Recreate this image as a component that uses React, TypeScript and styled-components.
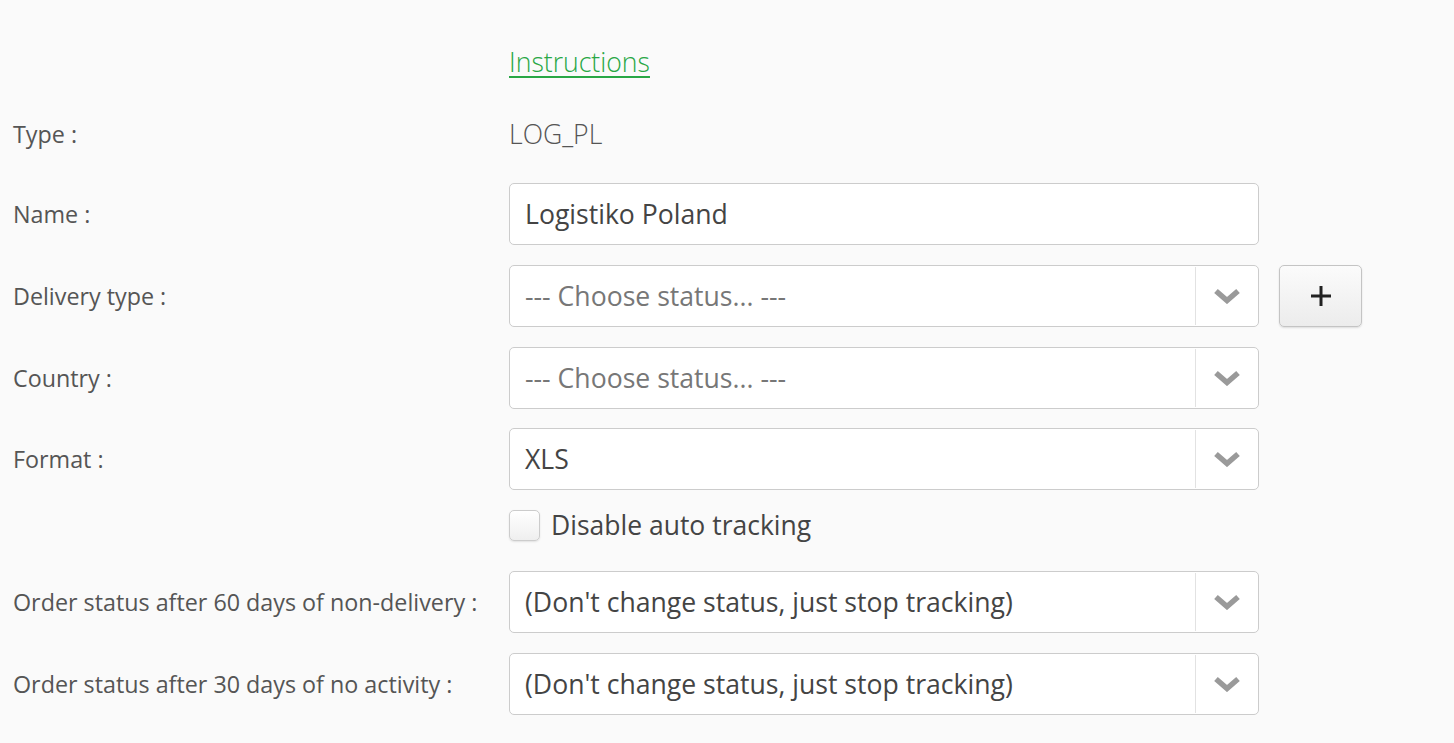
import styled, { createGlobalStyle } from "styled-components";

const GlobalStyle = createGlobalStyle`
  html, body {
    margin: 0;
    padding: 0;
    background: #fafafa;
  }
  body {
    font-family: "Open Sans", "Liberation Sans", sans-serif;
    color: #555;
  }
`;

const Form = styled.div`
  padding: 42px 0 0 13px;
`;

const Row = styled.div<{ $h?: number; $mb?: number }>`
  display: grid;
  grid-template-columns: 476px 750px auto;
  column-gap: 20px;
  align-items: center;
  height: ${(p) => p.$h ?? 62}px;
  margin-bottom: ${(p) => p.$mb ?? 20}px;
`;

const Label = styled.label`
  font-size: 23.3px;
  color: #555;
  white-space: nowrap;
`;

const Link = styled.a`
  font-size: 26.6px;
  font-weight: 300;
  color: #28a745;
  text-decoration: underline;
  text-underline-offset: 4px;
  text-decoration-thickness: 2px;
`;

const Plain = styled.span`
  font-size: 26.6px;
  font-weight: 300;
  color: #555;
`;

const Input = styled.div`
  box-sizing: border-box;
  height: 62px;
  display: flex;
  align-items: center;
  padding: 0 15px;
  background: #fff;
  border: 1px solid #ccc;
  border-radius: 5px;
  font-size: 26.6px;
  color: #444;
`;

const SelectBox = styled.div`
  box-sizing: border-box;
  height: 62px;
  display: flex;
  align-items: stretch;
  background: #fff;
  border: 1px solid #ccc;
  border-radius: 5px;
`;

const SelectValue = styled.div<{ $placeholder?: boolean }>`
  flex: 1;
  display: flex;
  align-items: center;
  padding: 0 15px;
  font-size: 26.6px;
  white-space: nowrap;
  color: ${(p) => (p.$placeholder ? "#777" : "#444")};
`;

const Arrow = styled.div`
  width: 62px;
  border-left: 1px solid #e2e2e2;
  margin: 1px 0;
  display: flex;
  align-items: center;
  justify-content: center;
`;

const AddButton = styled.button`
  box-sizing: border-box;
  width: 83px;
  height: 62px;
  border: 1px solid #c4c4c4;
  border-radius: 5px;
  background: linear-gradient(#fbfbfb, #ececec);
  box-shadow: 0 1px 2px rgba(0, 0, 0, 0.12);
  display: flex;
  align-items: center;
  justify-content: center;
  padding: 0;
`;

const CheckLine = styled.div`
  display: flex;
  align-items: center;
  gap: 11px;
  font-size: 26.5px;
  line-height: 31px;
  color: #444;
`;

const CheckBox = styled.span`
  box-sizing: border-box;
  width: 31px;
  height: 31px;
  border: 1px solid #ccc;
  border-radius: 5px;
  background: linear-gradient(#fff, #efefef);
  box-shadow: 0 1px 2px rgba(0, 0, 0, 0.1);
`;

const Chevron = () => (
  <svg width="28" height="16" viewBox="0 0 28 16">
    <polyline
      points="3,3 14,12.5 25,3"
      fill="none"
      stroke="#9a9a9a"
      strokeWidth="5.5"
      strokeLinejoin="miter"
    />
  </svg>
);

const Plus = () => (
  <svg width="22" height="22" viewBox="0 0 22 22">
    <path d="M11 1v20M1 11h20" stroke="#222" strokeWidth="3" />
  </svg>
);

const Select = ({ value, placeholder }: { value: string; placeholder?: boolean }) => (
  <SelectBox>
    <SelectValue $placeholder={placeholder}>{value}</SelectValue>
    <Arrow>
      <Chevron />
    </Arrow>
  </SelectBox>
);

export default function App() {
  return (
    <>
      <GlobalStyle />
      <Form>
        <Row $h={40} $mb={32}>
          <span />
          <div>
            <Link href="#">Instructions</Link>
          </div>
        </Row>
        <Row $h={40} $mb={29}>
          <Label>Type :</Label>
          <Plain>LOG_PL</Plain>
        </Row>
        <Row>
          <Label>Name :</Label>
          <Input>Logistiko Poland</Input>
        </Row>
        <Row>
          <Label>Delivery type :</Label>
          <Select value="--- Choose status... ---" placeholder />
          <AddButton>
            <Plus />
          </AddButton>
        </Row>
        <Row $mb={19}>
          <Label>Country :</Label>
          <Select value="--- Choose status... ---" placeholder />
        </Row>
        <Row>
          <Label>Format :</Label>
          <Select value="XLS" />
        </Row>
        <Row $h={31} $mb={30}>
          <span />
          <CheckLine>
            <CheckBox />
            Disable auto tracking
          </CheckLine>
        </Row>
        <Row>
          <Label>Order status after 60 days of non-delivery :</Label>
          <Select value="(Don't change status, just stop tracking)" />
        </Row>
        <Row>
          <Label>Order status after 30 days of no activity :</Label>
          <Select value="(Don't change status, just stop tracking)" />
        </Row>
      </Form>
    </>
  );
}
